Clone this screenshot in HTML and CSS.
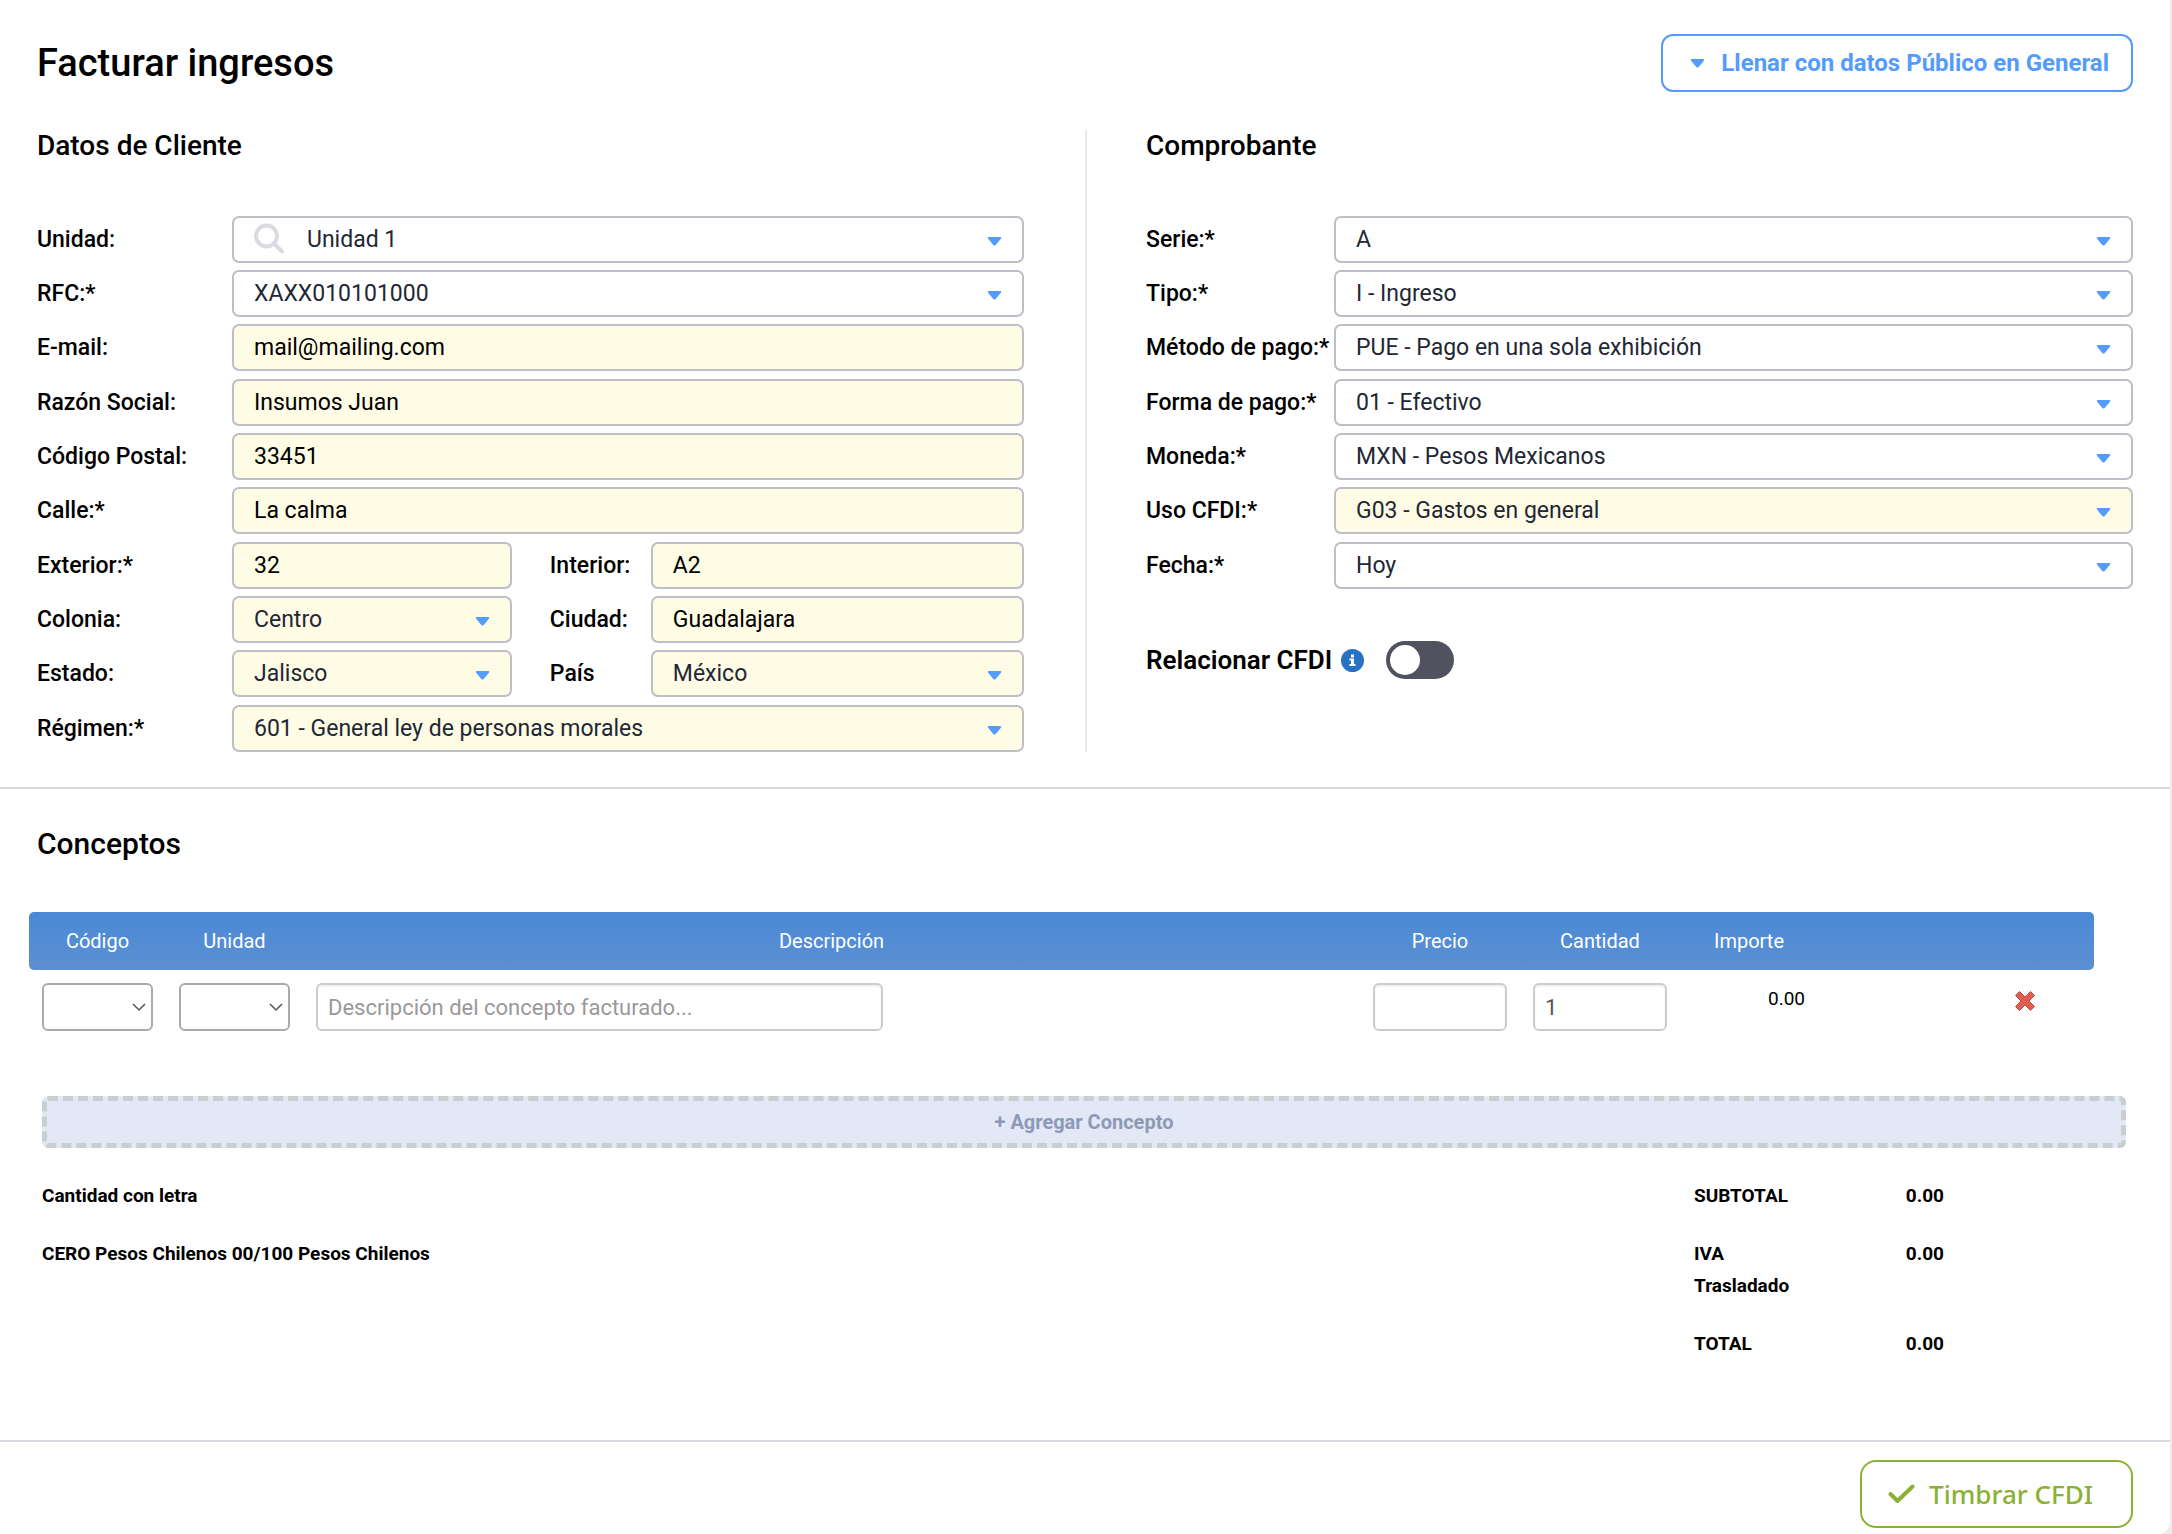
FILE: index.html
```html
<!DOCTYPE html>
<html lang="es">
<head>
    <meta charset="UTF-8">
    <meta name="viewport" content="width=device-width, initial-scale=1.0">
    <title>Facturar ingresos</title>
    <link rel="stylesheet" href="styles.css">
</head>
<body>
    <form class="page">
        <div class="page-header">
            <h1>Facturar ingresos</h1>
            <button type="button" class="btn btn-fill">
                <svg width="15" height="9" viewBox="0 0 14 9"><path d="M1 0h12q1.500.5.400 1.700L8.200 8q-1.200 1-2.400 0L.6 1.700Q-.5.500 1 0z" fill="currentColor"/></svg>
                Llenar con datos Público en General
            </button>
        </div>

        <div class="columns">
            <section class="column client">
                <h2>Datos de Cliente</h2>
                <div class="group">
                    <div class="row">
                        <label for="unidad">Unidad:</label>
                        <div class="search-wrapper">
                            <svg class="search-icon" width="32" height="32" viewBox="0 0 32 32" fill="none" stroke="#d9dbe0" stroke-width="4" stroke-linecap="round"><circle cx="13.500" cy="13" r="10.500"/><path d="M21.500 21l7.500 7.500"/></svg>
                            <select id="unidad" class="field"><option>Unidad 1</option></select>
                        </div>
                    </div>
                    <div class="row">
                        <label for="rfc">RFC:*</label>
                        <select id="rfc" class="field"><option>XAXX010101000</option></select>
                    </div>
                    <div class="row">
                        <label for="email">E-mail:</label>
                        <input type="text" id="email" class="field filled" value="mail@mailing.com">
                    </div>
                </div>
                <div class="group">
                    <div class="row">
                        <label for="razon">Razón Social:</label>
                        <input type="text" id="razon" class="field filled" value="Insumos Juan">
                    </div>
                    <div class="row">
                        <label for="cp">Código Postal:</label>
                        <input type="text" id="cp" class="field filled" value="33451">
                    </div>
                    <div class="row">
                        <label for="calle">Calle:*</label>
                        <input type="text" id="calle" class="field filled" value="La calma">
                    </div>
                </div>
                <div class="group">
                    <div class="row row-double">
                        <label for="exterior">Exterior:*</label>
                        <input type="text" id="exterior" class="field filled" value="32">
                        <label for="interior" class="label-second">Interior:</label>
                        <input type="text" id="interior" class="field filled" value="A2">
                    </div>
                    <div class="row row-double">
                        <label for="colonia">Colonia:</label>
                        <select id="colonia" class="field filled"><option>Centro</option></select>
                        <label for="ciudad" class="label-second">Ciudad:</label>
                        <input type="text" id="ciudad" class="field filled" value="Guadalajara">
                    </div>
                    <div class="row row-double">
                        <label for="estado">Estado:</label>
                        <select id="estado" class="field filled"><option>Jalisco</option></select>
                        <label for="pais" class="label-second">País</label>
                        <select id="pais" class="field filled"><option>México</option></select>
                    </div>
                </div>
                <div class="group">
                    <div class="row">
                        <label for="regimen">Régimen:*</label>
                        <select id="regimen" class="field filled"><option>601 - General ley de personas morales</option></select>
                    </div>
                </div>
            </section>

            <section class="column receipt">
                <h2>Comprobante</h2>
                <div class="group">
                    <div class="row">
                        <label for="serie">Serie:*</label>
                        <select id="serie" class="field"><option>A</option></select>
                    </div>
                    <div class="row">
                        <label for="tipo">Tipo:*</label>
                        <select id="tipo" class="field"><option>I - Ingreso</option></select>
                    </div>
                    <div class="row">
                        <label for="metodo">Método de pago:*</label>
                        <select id="metodo" class="field"><option>PUE - Pago en una sola exhibición</option></select>
                    </div>
                </div>
                <div class="group">
                    <div class="row">
                        <label for="forma">Forma de pago:*</label>
                        <select id="forma" class="field"><option>01 - Efectivo</option></select>
                    </div>
                    <div class="row">
                        <label for="moneda">Moneda:*</label>
                        <select id="moneda" class="field"><option>MXN - Pesos Mexicanos</option></select>
                    </div>
                    <div class="row">
                        <label for="uso">Uso CFDI:*</label>
                        <select id="uso" class="field filled"><option>G03 - Gastos en general</option></select>
                    </div>
                </div>
                <div class="group">
                    <div class="row">
                        <label for="fecha">Fecha:*</label>
                        <select id="fecha" class="field"><option>Hoy</option></select>
                    </div>
                </div>
                <div class="relate">
                    <label for="relacionar">Relacionar CFDI</label>
                    <svg class="info-icon" width="23" height="23" viewBox="0 0 23 23"><circle cx="11.500" cy="11.500" r="11.500" fill="#2872c4"/><path d="M10 5.500h3v3h-3zM8.500 9.500H13v5.500h1.500v2h-6v-2H10v-3.500H8.500z" fill="#fff"/></svg>
                    <input type="checkbox" id="relacionar" class="switch">
                </div>
            </section>
        </div>

        <section class="concepts">
            <h2>Conceptos</h2>
            <table class="concept-table">
                <colgroup>
                    <col class="col-code"><col class="col-code"><col>
                    <col class="col-number"><col class="col-number">
                    <col class="col-amount"><col class="col-amount"><col class="col-amount">
                </colgroup>
                <thead>
                    <tr>
                        <th>Código</th>
                        <th>Unidad</th>
                        <th>Descripción</th>
                        <th>Precio</th>
                        <th>Cantidad</th>
                        <th>Importe</th>
                        <th></th>
                        <th></th>
                    </tr>
                </thead>
                <tbody>
                    <tr>
                        <td><select class="cell-field cell-select" aria-label="Código"><option></option></select></td>
                        <td><select class="cell-field cell-select" aria-label="Unidad"><option></option></select></td>
                        <td><input type="text" class="cell-field cell-description" aria-label="Descripción" placeholder="Descripción del concepto facturado..."></td>
                        <td><input type="text" class="cell-field" aria-label="Precio"></td>
                        <td><input type="text" class="cell-field" aria-label="Cantidad" value="1"></td>
                        <td class="amount">0.00</td>
                        <td></td>
                        <td class="remove">
                            <button type="button" class="btn-remove" aria-label="Eliminar concepto">
                                <svg width="22" height="22" viewBox="0 0 22 22"><path d="M5.500 1.500L11 7l5.500-5.500 4 4L15 11l5.500 5.500-4 4L11 15l-5.500 5.500-4-4L7 11 1.500 5.500z" fill="#de5f50" stroke="#c04a40" stroke-linejoin="round"/></svg>
                            </button>
                        </td>
                    </tr>
                </tbody>
            </table>

            <button type="button" class="btn-add">+ Agregar Concepto</button>

            <div class="summary">
                <div class="in-words">
                    <p>Cantidad con letra</p>
                    <p>CERO Pesos Chilenos 00/100 Pesos Chilenos</p>
                </div>
                <table class="totals">
                    <tr><th>SUBTOTAL</th><td>0.00</td></tr>
                    <tr><th>IVA Trasladado</th><td>0.00</td></tr>
                    <tr><th>TOTAL</th><td>0.00</td></tr>
                </table>
            </div>
        </section>

        <div class="page-footer">
            <button type="submit" class="btn btn-stamp">
                <svg width="27" height="20" viewBox="0 0 27 20" fill="none" stroke="currentColor" stroke-width="4" stroke-linecap="round" stroke-linejoin="round"><path d="M2.500 10l7 7L24.500 2.500"/></svg>
                Timbrar CFDI
            </button>
        </div>
    </form>
</body>
</html>
```
FILE: styles.css
```css
:root {
    --blue: #549bfa;
    --green: #8ab132;
    --line: #d9dadf;
    --field-border: #bdbec6;
    --filled: #fffce6;
    --text-dark: #222735;
}

* {
    box-sizing: border-box;
    margin: 0;
    padding: 0;
}

body {
    font-family: Roboto, sans-serif;
    font-size: 23px;
    color: #000;
    background-color: #ececee;
}

.page {
    min-height: 100vh;
    margin-right: 2px;
    background-color: white;
    border-bottom-right-radius: 12px;
}

.page-header {
    display: flex;
    justify-content: space-between;
    align-items: center;
    padding: 34px 37px 0;
}

h1 {
    font-size: 38px;
    font-weight: 500;
}

h2 {
    font-size: 28px;
    font-weight: 500;
    line-height: 32px;
}

.btn {
    display: flex;
    align-items: center;
    background: white;
    border: 2px solid currentColor;
    cursor: pointer;
}

.btn-fill {
    height: 58px;
    gap: 16px;
    padding: 0 22px 0 27px;
    border-radius: 12px;
    color: var(--blue);
    font-family: inherit;
    font-size: 24px;
    font-weight: 700;
}

/* Client and receipt columns */
.columns {
    display: flex;
    padding: 38px 37px 35px;
}

.column {
    flex: 1;
}

.client {
    padding-right: 61px;
    border-right: 2px solid #e9e9eb;
}

.receipt {
    padding-left: 59px;
}

.column h2 {
    margin-bottom: 54px;
}

.group {
    display: grid;
    gap: 7px;
}

.group + .group {
    margin-top: 8px;
}

.row {
    display: grid;
    grid-template-columns: 195px 1fr;
    align-items: center;
}

.receipt .row {
    grid-template-columns: 188px 1fr;
}

.client .row-double {
    grid-template-columns: 195px 3fr 139px 4fr;
}

label {
    font-weight: 500;
    white-space: nowrap;
}

.label-second {
    padding-left: 38px;
}

.field {
    width: 100%;
    min-width: 0;
    height: 47px;
    padding: 0 20px;
    border: 2px solid var(--field-border);
    border-radius: 7px;
    background-color: white;
    font-family: inherit;
    font-size: 23px;
    color: #000;
}

select.field {
    appearance: none;
    color: var(--text-dark);
    background-image: url("data:image/svg+xml,%3Csvg xmlns='http://www.w3.org/2000/svg' width='15' height='9' viewBox='0 0 14 9'%3E%3Cpath d='M1 0h12q1.500.5.400 1.700L8.200 8q-1.200 1-2.400 0L.6 1.700Q-.5.500 1 0z' fill='%23549bfa'/%3E%3C/svg%3E");
    background-repeat: no-repeat;
    background-position: right 20px top 19px;
}

.field.filled {
    background-color: var(--filled);
}

.search-wrapper {
    position: relative;
}

.search-wrapper .field {
    padding-left: 73px;
}

.search-icon {
    position: absolute;
    left: 21px;
    top: 7px;
}

.relate {
    display: flex;
    align-items: center;
    margin-top: 52px;
}

.relate label {
    font-size: 26px;
    font-weight: 600;
}

.info-icon {
    margin: 0 22px 0 9px;
}

.switch {
    appearance: none;
    width: 68px;
    height: 38px;
    padding: 4px;
    border-radius: 19px;
    background-color: #50535f;
    cursor: pointer;
}

.switch::before {
    content: "";
    display: block;
    width: 30px;
    height: 30px;
    border-radius: 50%;
    background-color: white;
}

.switch:checked::before {
    margin-left: auto;
}

/* Concepts */
.concepts {
    padding: 39px 44px 54px 29px;
    border-top: 2px solid var(--line);
}

.concepts h2 {
    margin: 0 8px 52px;
    font-size: 30px;
}

.concept-table {
    width: calc(100% - 32px);
    table-layout: fixed;
    border-collapse: collapse;
}

.col-code {
    width: 137px;
}

.col-number {
    width: 160px;
}

.col-amount {
    width: 138px;
}

.concept-table th {
    height: 58px;
    background: linear-gradient(#4a89d6, #5c90d1);
    color: white;
    font-size: 20px;
    font-weight: 400;
}

.concept-table th:first-child {
    border-radius: 5px 0 0 5px;
}

.concept-table th:last-child {
    border-radius: 0 5px 5px 0;
}

.concept-table td {
    padding: 13px 13px 0;
    vertical-align: top;
}

.cell-field {
    display: block;
    width: 100%;
    height: 48px;
    padding: 0 10px;
    border: 2px solid #ccc;
    border-radius: 6px;
    background-color: white;
    box-shadow: inset 0 2px 2px rgba(0, 0, 0, 0.06);
    font-family: inherit;
    font-size: 22px;
    color: #555;
}

.cell-field::placeholder {
    color: #999;
}

.cell-description {
    width: 55%;
}

.cell-select {
    appearance: none;
    border-color: #aaa;
    box-shadow: none;
    background: white url("data:image/svg+xml,%3Csvg xmlns='http://www.w3.org/2000/svg' width='14' height='9' viewBox='0 0 14 9'%3E%3Cpath d='M1 1l6 6 6-6' fill='none' stroke='%23555' stroke-width='1.500'/%3E%3C/svg%3E") no-repeat right 5px center;
}

.concept-table .amount {
    padding-top: 17px;
    text-align: right;
    font-size: 19px;
}

.concept-table .remove {
    padding-top: 20px;
    text-align: center;
}

.btn-remove {
    border: none;
    background: none;
    cursor: pointer;
}

.btn-add {
    display: block;
    width: calc(100% - 13px);
    height: 52px;
    margin: 65px 0 0 13px;
    border: 5px dashed #c8ced1;
    border-radius: 6px;
    background-color: #e2e8f6;
    color: #8d99b5;
    font-family: inherit;
    font-size: 20px;
    font-weight: 700;
    cursor: pointer;
}

.summary {
    display: flex;
    justify-content: space-between;
    padding: 32px 182px 0 13px;
    font-size: 19px;
    font-weight: 700;
    line-height: 32px;
}

.in-words p {
    margin-bottom: 26px;
}

.totals {
    width: 250px;
    border-collapse: collapse;
}

.totals th {
    width: 120px;
    padding-bottom: 26px;
    text-align: left;
    font-weight: inherit;
}

.totals td {
    text-align: right;
    vertical-align: top;
}

.page-footer {
    display: flex;
    justify-content: flex-end;
    padding: 18px 37px 5px;
    border-top: 2px solid var(--line);
}

.btn-stamp {
    height: 68px;
    gap: 14px;
    padding: 0 38px 0 26px;
    border-radius: 16px;
    color: var(--green);
    font-family: "Noto Sans", sans-serif;
    font-size: 26px;
    font-weight: 500;
}
```
